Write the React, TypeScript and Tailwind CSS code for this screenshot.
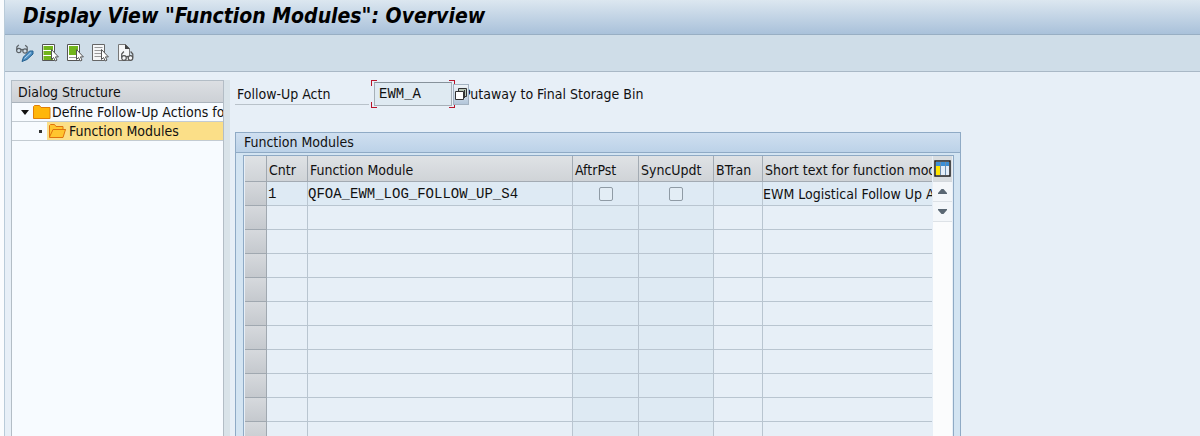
import type { ReactNode } from "react";
import clsx from "clsx";

const columns = [
  { name: "Cntr", width: "w-[41px]" },
  { name: "Function Module", width: "w-[265px]" },
  { name: "AftrPst", width: "w-[66px]", check: true },
  { name: "SyncUpdt", width: "w-[75px]", check: true },
  { name: "BTran", width: "w-[49px]" },
  { name: "Short text for function mod", width: "" },
];

const modules = [
  {
    cntr: "1",
    name: "QFOA_EWM_LOG_FOLLOW_UP_S4",
    aftrPst: false,
    syncUpdt: false,
    text: "EWM Logistical Follow Up A",
  },
];

const emptyRows = Array.from({ length: 12 }, (_, i) => i);

const Pointer = () => (
  <path d="M10.500 6.500v10l2-2 1.800 3.500 1.700-.9-1.600-3.200h3z" fill="#fff" stroke="#555" />
);

function DisplayChangeIcon() {
  return (
    <svg width="18" height="20" viewBox="0 0 18 20" fill="none">
      <g stroke="#5b6166" strokeWidth="1.200">
        <circle cx="2.800" cy="7.500" r="2.200" />
        <circle cx="9" cy="8" r="2.200" />
        <path d="M5 7q1-1 2 0M.8 7V4l2-2.200M11.200 7.500V4l-2-1.700" />
      </g>
      <path d="M6 18.500l1.500-4.500 6-6h3.500v3l-6 5.500z" fill="#4d8fc4" stroke="#24608f" />
      <path d="M8.500 15.500l6.500-6" stroke="#b9d8ee" />
    </svg>
  );
}

function SelectAllIcon() {
  return (
    <svg width="18" height="20" viewBox="0 0 18 20" fill="none">
      <path d="M1.500 1.500h12v16h-12z" fill="#fff" stroke="#555" />
      <path d="M2.500 3H12v4H2.500zM2.500 8H12v4H2.500zM2.500 13H12v4H2.500z" fill="#72b51c" />
      <Pointer />
    </svg>
  );
}

function SelectBlockIcon() {
  return (
    <svg width="18" height="20" viewBox="0 0 18 20" fill="none">
      <path d="M1.500 1.500h12v16h-12z" fill="#fff" stroke="#555" />
      <path d="M3 3h9v9H3z" fill="#72b51c" />
      <path d="M3 14.500h8" stroke="#999" />
      <Pointer />
    </svg>
  );
}

function DeselectAllIcon() {
  return (
    <svg width="18" height="20" viewBox="0 0 18 20" fill="none">
      <path d="M1.500 1.500h12v16h-12z" fill="#f5f6f7" stroke="#666" />
      <path d="M3.500 4.500h8M3.500 7.500h8M3.500 10.500h7M3.500 13.500h7" stroke="#999" />
      <Pointer />
    </svg>
  );
}

function DetailsIcon() {
  return (
    <svg width="18" height="20" viewBox="0 0 18 20" fill="none">
      <path d="M2.500 17.500v-16h7l4 4v12z" fill="#f5f6f7" stroke="#777" />
      <path d="M9 1v5h5z" fill="#444" />
      <g stroke="#555" strokeWidth="1.200" fill="#f5f6f7">
        <circle cx="8" cy="15" r="2.300" />
        <circle cx="14.500" cy="15" r="2.300" />
        <path d="M5.700 14.500v-3.500l2.200-2.500M16.800 14.500v-3.500l-2.200-2.500M10.300 14q1-1 2 0" fill="none" />
      </g>
    </svg>
  );
}

function FolderIcon() {
  return (
    <svg width="18" height="14" viewBox="0 0 18 14" className="shrink-0">
      <path d="M.5 13.500v-12l1-1h5l1.500 2h9v11z" fill="#ffb60a" stroke="#e07f08" />
    </svg>
  );
}

function OpenFolderIcon() {
  return (
    <svg width="18" height="14" viewBox="0 0 18 14" className="shrink-0">
      <path d="M.5 13.500v-12l1-1h4l1.500 2h7v3h2.500l-2.500 8z" fill="#ffc52e" stroke="#e0730c" />
      <path d="M.5 13L4 5.500h12.500" fill="none" stroke="#e0730c" />
    </svg>
  );
}

function ValueHelpIcon() {
  return (
    <svg width="14" height="14" viewBox="0 0 14 14" className="shrink-0">
      <path d="M4.500 1.500h8v8h-8z" fill="#b8c4b4" stroke="#333" />
      <path d="M10.500 3v8" stroke="#333" />
      <path d="M1.500 4.500h8v8h-8z" fill="#fff" stroke="#333" />
    </svg>
  );
}

function TableSettingsIcon() {
  return (
    <svg width="17" height="17" viewBox="0 0 17 17">
      <path d="M1 1h15v15H1z" fill="#fff" stroke="#1d1d1d" strokeWidth="1.500" />
      <path d="M2 2h13v4H2z" fill="#3b8fd6" />
      <path d="M2 6h4v9H2z" fill="#ffe500" />
      <path d="M7 6h4v9H7zM12 6h3v9h-3z" fill="#e4eef8" />
      <path d="M6.500 2v13M11.500 2v13" stroke="#6d8fae" />
    </svg>
  );
}

function ToolButton({ label, children }: { label: string; children: ReactNode }) {
  return (
    <button type="button" aria-label={label} title={label} className="h-5 w-[18px]">
      {children}
    </button>
  );
}

function DialogStructure() {
  return (
    <nav className="w-[213px] shrink-0 overflow-hidden border-x border-t border-[#b3bdc6] bg-[#f7fbff]">
      <h2 className="h-[22px] border-b border-[#aab3bc] bg-linear-to-b from-[#dcdfe3] to-[#cdd1d6] pl-1.5 leading-[22px]">
        Dialog Structure
      </h2>
      <ul>
        <li className="border-b border-[#c3cbd2]">
          <button type="button" className="flex h-[18px] items-center whitespace-nowrap pl-[9px]">
            <svg width="8" height="5" viewBox="0 0 8 5" className="mr-1 shrink-0">
              <path d="M0 0h8L4 5z" fill="#111" />
            </svg>
            <FolderIcon />
            <span className="ml-px">Define Follow-Up Actions for</span>
          </button>
        </li>
        <li className="flex border-b border-[#c3cbd2] pl-[27px]">
          <span className="flex w-2 items-center">
            <span className="size-[3px] bg-[#333]" />
          </span>
          <button
            type="button"
            className="flex h-[18px] flex-1 items-center whitespace-nowrap bg-[#fbdf88] pl-0.5"
          >
            <OpenFolderIcon />
            <span className="ml-0.5">Function Modules</span>
          </button>
        </li>
      </ul>
    </nav>
  );
}

function FollowUpField() {
  return (
    <div className="flex h-7 items-center">
      <label
        htmlFor="action"
        className="mr-0.5 h-[25px] w-[134px] self-start border-b border-[#b9c2ca] pl-0.5 leading-7"
      >
        Follow-Up Actn
      </label>
      <div className="relative h-7 w-[84px] px-[3px] py-0.5">
        <input
          id="action"
          readOnly
          defaultValue="EWM_A"
          className="h-6 w-full border border-[#a6b0b8] border-t-[#87929b] bg-[#dfeaf2] px-1 font-['Liberation_Mono',monospace] text-sm outline-none"
        />
        <span className="absolute left-0 top-0 size-1.5 border-l border-t border-[#b8142a]" />
        <span className="absolute right-0 top-0 size-1.5 border-r border-t border-[#b8142a]" />
        <span className="absolute bottom-0 left-0 size-1.5 border-b border-l border-[#b8142a]" />
        <span className="absolute bottom-0 right-0 size-1.5 border-b border-r border-[#b8142a]" />
      </div>
      <button
        type="button"
        aria-label="Value help"
        className="z-10 -ml-0.5 flex h-[21px] w-4 items-center justify-center border border-[#a3b2c1] bg-linear-to-b from-[#eef3f7] to-[#b3c6da]"
      >
        <ValueHelpIcon />
      </button>
      <span className="-ml-1.5 whitespace-nowrap">Putaway to Final Storage Bin</span>
    </div>
  );
}

function ModuleTable() {
  const cell = "h-6 overflow-hidden whitespace-nowrap border-b border-r border-[#b9c5d0] px-0 py-0";
  const rowHead = "border-b border-r border-[#a0a8b0] bg-linear-to-b from-[#d6d9dd] to-[#c5c9ce]";

  return (
    <table className="w-full table-fixed border-separate border-spacing-0">
      <colgroup>
        <col className="w-[22px]" />
        {columns.map((c) => (
          <col key={c.name} className={c.width} />
        ))}
      </colgroup>
      <thead>
        <tr className="bg-linear-to-b from-[#dfe2e5] to-[#cfd3d7]">
          <td className="h-[26px] border-b border-r border-[#a0a8b0]" />
          {columns.map((c, i) => (
            <th
              key={c.name}
              className={clsx(
                "h-[26px] overflow-hidden whitespace-nowrap border-b border-[#a3abb3] pb-0 pl-0.5 pt-0.5 text-left font-normal",
                i < columns.length - 1 && "border-r"
              )}
            >
              {c.name}
            </th>
          ))}
        </tr>
      </thead>
      <tbody>
        {modules.map((m) => (
          <tr key={m.cntr} className="bg-[#deeaf4]">
            <td className={rowHead} />
            <td className={clsx(cell, "pl-px font-['Liberation_Mono',monospace]")}>{m.cntr}</td>
            <td className={clsx(cell, "font-['Liberation_Mono',monospace]")}>{m.name}</td>
            <td className={cell}>
              <input
                type="checkbox"
                aria-label="AftrPst"
                disabled
                defaultChecked={m.aftrPst}
                className="mx-auto block size-3.5 appearance-none rounded-xs border border-[#8f9ba5] bg-[#e3edf5]"
              />
            </td>
            <td className={cell}>
              <input
                type="checkbox"
                aria-label="SyncUpdt"
                disabled
                defaultChecked={m.syncUpdt}
                className="mx-auto block size-3.5 appearance-none rounded-xs border border-[#8f9ba5] bg-[#e3edf5]"
              />
            </td>
            <td className={cell} />
            <td className={clsx(cell, "border-r-0")}>{m.text}</td>
          </tr>
        ))}
        {emptyRows.map((row) => (
          <tr key={row}>
            <td className={rowHead} />
            {columns.map((c, i) => (
              <td
                key={c.name}
                className={clsx(
                  cell,
                  c.check ? "bg-[#deeaf3]" : "bg-[#e7eff7]",
                  i === columns.length - 1 && "border-r-0"
                )}
              />
            ))}
          </tr>
        ))}
      </tbody>
    </table>
  );
}

function App() {
  return (
    <div className="h-screen overflow-hidden bg-[#fafcfe] pl-1 font-['DejaVu_Sans_Condensed','Noto_Sans',sans-serif] text-sm leading-[18px] text-[#111]">
      <div className="flex h-full flex-col border-l border-[#b9cbd9] bg-[#e7eff7]">
        <header className="shrink-0 border-b border-[#98aec3] bg-linear-to-b from-[#dce7f0] to-[#a9c1da]">
          <h1 className="h-[34px] whitespace-nowrap pl-[18px] text-[21px] font-bold italic leading-8 text-black">
            Display View "Function Modules": Overview
          </h1>
        </header>
        <div className="flex h-[37px] shrink-0 items-center gap-[7px] border-b border-[#a9b8c6] bg-[#cfdde8] pl-[11px]">
          <ToolButton label="Display/Change">
            <DisplayChangeIcon />
          </ToolButton>
          <ToolButton label="Select all">
            <SelectAllIcon />
          </ToolButton>
          <ToolButton label="Select block">
            <SelectBlockIcon />
          </ToolButton>
          <ToolButton label="Deselect all">
            <DeselectAllIcon />
          </ToolButton>
          <ToolButton label="Details">
            <DetailsIcon />
          </ToolButton>
        </div>
        <div className="flex min-h-0 flex-1 pl-1.5 pt-2">
          <DialogStructure />
          <div className="w-1.5 shrink-0 bg-[#d9e3e9]" />
          <main className="min-w-0 flex-1 pl-[5px]">
            <FollowUpField />
            <section className="mt-6 max-w-[726px] border border-[#8faac5] bg-[#d3e4f2]">
              <h2 className="h-5 border-b border-[#8faac5] bg-linear-to-b from-[#cfdff0] to-[#bcd2e8] pl-2">
                Function Modules
              </h2>
              <div className="ml-[7px] mr-1.5 mt-0.5 flex border border-[#8faac5] bg-[#e7eff7] px-px">
                <div className="min-w-0 flex-1">
                  <ModuleTable />
                </div>
                <div className="ml-px flex w-[19px] shrink-0 flex-col bg-[#fbfcfd]">
                  <button
                    type="button"
                    aria-label="Table settings"
                    className="flex h-[26px] items-center justify-center border-b border-[#d3d8dd] bg-[#d9dde0]"
                  >
                    <TableSettingsIcon />
                  </button>
                  <button
                    type="button"
                    aria-label="Scroll up"
                    className="flex h-5 items-center justify-center border-b border-[#dde2e7] bg-[#f4f7fa]"
                  >
                    <svg width="9" height="5" viewBox="0 0 9 5">
                      <path d="M3.500 0h2L9 4v1H0V4z" fill="#5a6773" />
                    </svg>
                  </button>
                  <button
                    type="button"
                    aria-label="Scroll down"
                    className="flex h-5 items-center justify-center border-b border-[#dde2e7] bg-[#f4f7fa]"
                  >
                    <svg width="9" height="5" viewBox="0 0 9 5">
                      <path d="M0 0h9v1L5.500 5h-2L0 1z" fill="#5a6773" />
                    </svg>
                  </button>
                </div>
              </div>
            </section>
          </main>
        </div>
      </div>
    </div>
  );
}

export default App;
